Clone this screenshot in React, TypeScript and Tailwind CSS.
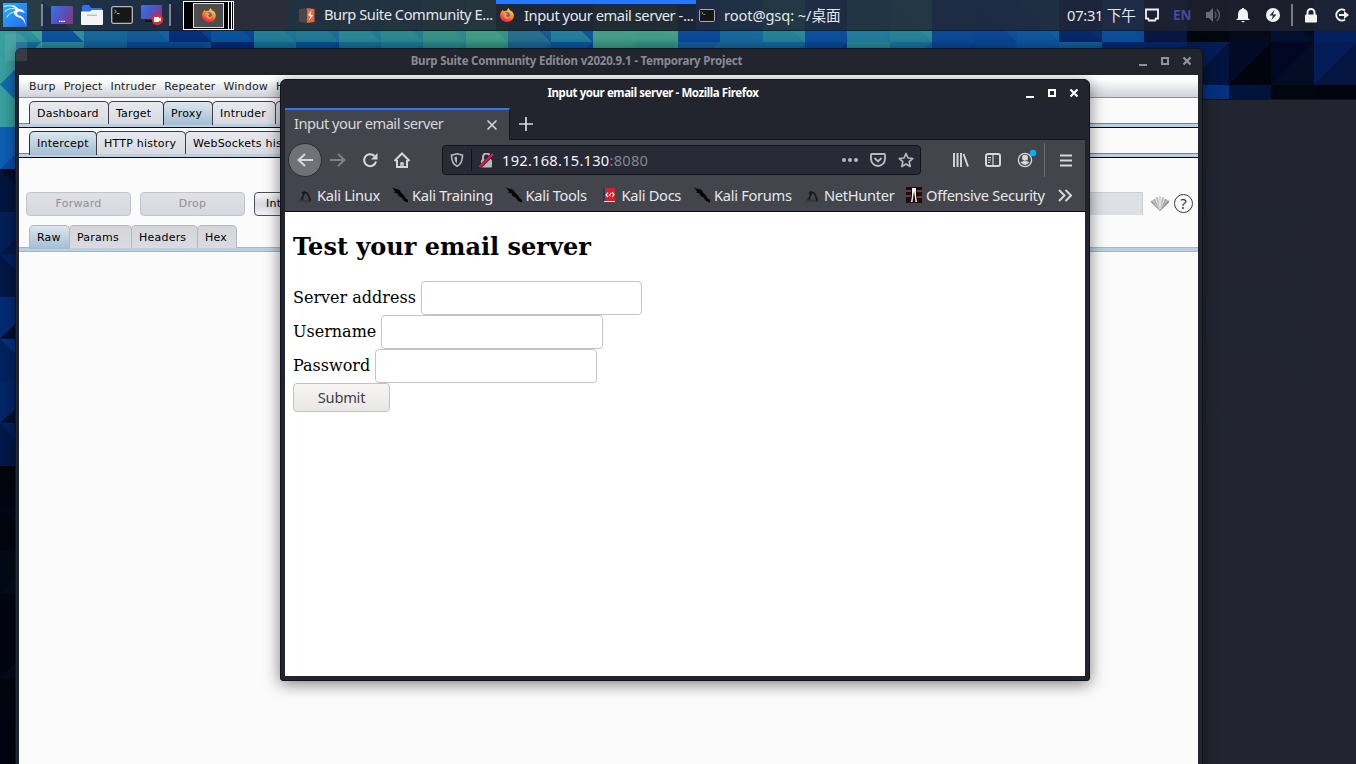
import React from 'react';

const TOP = [
  ['#3fa39c', '#2b929f'], ['#318f9f', '#0d54a0'], ['#14669f', '#17689c'], ['#1263a1', '#145b99'], ['#073f92', '#052f7c'],
  ['#0a4796', '#0b53a0'], ['#17789b', '#247e99'], ['#1c6f9c', '#227b98'], ['#207d99', '#298998'], ['#237f95', '#2c8b92'],
  ['#2e8b92', '#369488'], ['#389489', '#409f88'], ['#155c98', '#277090'], ['#0f56a0', '#237f9f'], ['#42a08c', '#449f8a'],
  ['#44a087', '#409f88'], ['#0b4b9c', '#0b4c9c'], ['#176aa2', '#176aa0'], ['#298b9a', '#25839a'], ['#0b4e9e', '#0b52a0'],
  ['#207b9d', '#227e9f'], ['#2b8b9c', '#26859a'], ['#0b4998', '#0b4b9a'], ['#0c519b', '#0b4698'], ['#10609e', '#0f57a0'],
  ['#07306e', '#06296c'], ['#0b4c9a', '#0b4f9c'], ['#061845', '#081842'], ['#010510', '#02060f'], ['#050818', '#070a1a'],
  ['#02091c', '#021030'], ['#032059', '#03205f'],
];
const MID = [
  ['#3da49d', '#1874a6'], ['#2f8da0', '#2b8da0'], ['#17639f', '#17659f'], ['#0b4a9a', '#0b4a98'], ['#0b5ba0', '#0b4f98'],
  ['#062a78', '#062c7c'], ['#17709a', '#17729c'], ['#094b98', '#0a5299'], ['#166d97', '#1b7498'], ['#1b7896', '#207c95'],
  ['#298694', '#2e8b90'], ['#359488', '#3a9888'], ['#176296', '#1b6a99'], ['#0b499b', '#0f56a0'], ['#3b9a8a', '#3f9f8a'],
  ['#3b9a8a', '#379588'], ['#1a6da0', '#155fa0'], ['#176ba0', '#1868a0'], ['#1666a0', '#156aa0'], ['#073e90', '#0a4a98'],
  ['#298b9a', '#2a8b9a'], ['#16669e', '#1b74a0'], ['#094490', '#0a4a98'], ['#0c509a', '#0b4c99'], ['#0f569e', '#0f58a0'],
  ['#105699', '#13609e'], ['#072b70', '#052a73'], ['#06225e', '#05286c'], ['#02143d', '#031d55'], ['#01040d', '#020a25'],
  ['#020c22', '#020822'], ['#031540', '#041d58'],
];
const LOW = ['#3aa09f', '#083d8a', '#05307f', '#02143a', '#01060f', '#010510'];
const EDGE = [
  ['#0d5fb4', '#0a4aa8'], ['#02153f', '#010c2a'], ['#032058', '#031848'], ['#021744', '#022062'], ['#032b74', '#010f30'],
  ['#02225e', '#033080'], ['#032668', '#01102e'], ['#021848', '#032060'], ['#01060f', '#020518'], ['#01060f', '#010818'],
  ['#010a16', '#020d20'], ['#010512', '#010714'], ['#010512', '#020d1c'], ['#010610', '#02060e'], ['#010410', '#01050f'],
];

function lowColor(i: number) {
  if (i === 0) return LOW[0];
  return i < 28 ? LOW[1] : LOW[i - 26];
}

function Wallpaper() {
  const p = 42.4;
  return (
    <svg className="absolute inset-0" width="1356" height="764" shapeRendering="crispEdges">
      <rect width="1356" height="764" fill="#010611" />
      {TOP.map(([a, b], i) => (
        <g key={i} transform={`translate(${i * p - 0.6} 0)`}>
          <rect width="43" height="43" fill={a} />
          <path d="M0 0V42.4H42.4z" fill={b} />
          <rect y="42" width="43" height="43" fill={MID[i][0]} />
          <path d={i > 26 ? 'M0 84.7V42H0L42.4 42z' : 'M0 42H42.4L36 48V84L0 84z'} fill={MID[i][1]} />
          <rect y="84.6" width="43" height="43" fill={lowColor(i)} />
        </g>
      ))}
      {EDGE.map(([a, b], i) => (
        <g key={i} transform={`translate(0 ${127 + i * p})`}>
          <rect width="16" height="43" fill={a} />
          <path d={i % 2 ? 'M0 0H16V16z' : 'M16 27V42H0z'} fill={b} />
        </g>
      ))}
      <rect y="31" width="16" height="96" fill="#38a09e" />
      <path d="M0 85L16 68V101z" fill="#1469ac" />
    </svg>
  );
}

function Terminal({ className = '' }: { className?: string }) {
  return (
    <svg className={className} viewBox="0 0 22 18">
      <rect x=".7" y=".7" width="20.6" height="16.6" rx="1.5" fill="#171717" stroke="#b8b8b8" strokeWidth="1.3" />
      <path d="M3.5 4l1.8 1.6L3.5 7M6 7.5h2.5" stroke="#ccc" fill="none" strokeWidth=".9" />
    </svg>
  );
}

function Firefox({ className = '' }: { className?: string }) {
  return (
    <svg className={className} viewBox="0 0 16 16">
      <defs>
        <linearGradient id="ff" x1=".8" y1="0" x2=".3" y2="1">
          <stop offset="0" stopColor="#ffe14a" /><stop offset=".45" stopColor="#ff9422" /><stop offset=".8" stopColor="#ff3b45" /><stop offset="1" stopColor="#e5205f" />
        </linearGradient>
      </defs>
      <path d="M2 3.5L2.6 2l1.7 1.8C6 3 7 3 8 3c.2-1.2.8-2 1.8-3 .4 1.8 2 2.4 3 4l.4-1C15 5 16 7 15.8 9c-.4 4-3.8 7-7.8 7S0 12.8 0 8.5C0 6.500 1 5 2 3.500z" fill="url(#ff)" />
      <circle cx="7.8" cy="8.4" r="3.5" fill="#5750d8" />
      <path d="M3.500 5.500c1.500-1 3-.5 4 .4 1 .8 2 .3 2 .8 0 .8-1.700 1-2.200 1.700-.5.8.5 2 1.900 1.800 1.200-.2 1.800-1 2.200-2-.1 3-1.500 4-3.500 4-3 0-5-3-4.400-6.700z" fill="#ff9a24" />
    </svg>
  );
}

function Kali() {
  return (
    <svg className="h-6 w-6 shrink-0" viewBox="0 0 24 24">
      <defs><linearGradient id="k" x2="1" y2="1"><stop stopColor="#26b5f5" /><stop offset="1" stopColor="#2666f4" /></linearGradient></defs>
      <rect width="24" height="24" fill="url(#k)" />
      <path d="M1 3.500c4-1.500 8-1 12 1.500M2 8.500c3-3 7-3.500 11-2.500M4 14c1.500-3 4-4.500 7-5" fill="none" stroke="#fff" strokeWidth=".9" strokeLinecap="round" />
      <path d="M8 2c3 .2 5.500 1.500 7 3.500l4.500 1.300L22 10l-5-1.500c-3-.3-4 2.500-1.500 3.700 4.500 1 7 4 7.200 10.300-1.300-4.800-3.500-7.200-7.200-8.200-4.500-1.200-6-5.300-2.500-8.300C11.800 4.300 10 2.800 8 2z" fill="#fff" />
    </svg>
  );
}

function PanelLaunchers() {
  return (
    <>
      <svg className="ml-2 h-[18px] w-[22px] shrink-0" viewBox="0 0 22 18">
        <defs><linearGradient id="m" x2="1" y2=".5"><stop stopColor="#3478ec" /><stop offset=".5" stopColor="#4f56c8" /><stop offset="1" stopColor="#7b3d88" /></linearGradient></defs>
        <rect width="22" height="18" rx="1" fill="url(#m)" /><path d="M8 15.300h6" stroke="#fff" strokeWidth="1.300" strokeDasharray="1.500 .7" />
      </svg>
      <svg className="ml-2 h-5 w-[22px] shrink-0" viewBox="0 0 22 20">
        <path d="M1 8V2q0-2 2-2h5l2 3h10q1 0 1 1v4z" fill="#2f73e8" /><path d="M0 6.500h9l2-1.500h11v14q0 1-1 1H1q-1 0-1-1z" fill="#f4f4f4" /><path d="M6.500 10.300h9" stroke="#c4bfbb" strokeWidth="1.600" strokeLinecap="round" />
      </svg>
      <Terminal className="ml-2 h-[18px] w-[22px] shrink-0" />
      <svg className="ml-[7px] h-[22px] w-[24px] shrink-0" viewBox="0 0 24 22">
        <rect x="1" y="1" width="21" height="14" rx="1" fill="url(#m)" /><path d="M5 17h13" stroke="#111" strokeWidth="2" />
        <circle cx="17.500" cy="15.500" r="5.800" fill="#e5252f" /><path d="M14 13h5v1.500l2-1v4l-2-1V18h-5z" fill="#fff" />
      </svg>
    </>
  );
}

function Panel() {
  return (
    <div className="absolute top-0 left-0 flex h-[31px] w-[1356px] items-center border-b border-[#1c1e26] bg-[#21242fce] pl-[3px] font-['Noto_Sans','Noto_Sans_CJK_SC',sans-serif] text-[14.67px] text-[#e6e7ea]">
      <Kali />
      <div className="ml-[14px] h-[22px] w-[2px] bg-[#7f8794]" />
      <PanelLaunchers />
      <div className="ml-[5px] h-[22px] w-[2px] bg-[#7f8794]" />
      <div className="ml-3 flex h-[29px] w-[51px] shrink-0 border border-white bg-black">
        <div className="h-full w-[10px] shrink-0" />
        <div className="-ml-px my-px flex w-[31px] shrink-0 items-center justify-center border border-[#ddd] bg-[#4d4d4d]"><Firefox className="h-[14px] w-[14px]" /></div>
        <div className="ml-1 w-[4px] shrink-0 border-x border-white" />
      </div>
      <div className="h-[30px] w-[54px] shrink-0 bg-[#2b2d39]" />
      <div className="flex h-[30px] w-[208px] shrink-0 items-center bg-[#242f3b66] pl-[11px]">
        <svg className="h-[15px] w-4 shrink-0" viewBox="0 0 16 15"><path d="M0 1l8-1v15l-8-1z" fill="#4b4746" /><path d="M8 0l7.500 1v13L8 15z" fill="#ee6238" /><path d="M12.500 2L9 7l2.500 1-2 5L14 7.500 11.500 6.500z" fill="#fff" /></svg>
        <span className="ml-[9px] pb-[2px] tracking-[-.44px] whitespace-nowrap">Burp Suite Community E...</span>
      </div>
      <div className="flex h-[30px] w-[200px] shrink-0 items-center border-t-4 border-[#2777ff] bg-[#1d222b99] pb-[5px] pl-1">
        <Firefox className="h-[14px] w-[14px] shrink-0" />
        <span className="ml-[10px] tracking-[-.43px] whitespace-nowrap">Input your email server -...</span>
      </div>
      <div className="flex h-[30px] w-[364px] shrink-0 items-center pl-[3px]">
        <Terminal className="h-[13px] w-4 shrink-0" />
        <span className="ml-[9px] tracking-[-.1px] whitespace-nowrap">root@gsq: ~/桌面</span>
      </div>
      <span className="ml-[7px] tracking-[-.25px] whitespace-nowrap">07:31 下午</span>
      <div className="ml-auto flex items-center pr-[7px]">
        <svg width="14" height="14" viewBox="0 0 14 14"><path d="M1 1.500h12v9h-2l-1 2H4l-1-2H1z" fill="none" stroke="#f3f3f3" strokeWidth="1.800" /></svg>
        <span className="ml-[14px] w-[18px] text-center text-[13.5px] font-bold text-[#424c9c]">EN</span>
        <svg className="ml-[14px]" width="16" height="16" viewBox="0 0 16 16"><path d="M1 5h3l4-4v14l-4-4H1z" fill="#6a6c75" /><path d="M10 5q2 3 0 6M12 2q5 6 0 12" stroke="#5c5e68" strokeWidth="1.400" fill="none" /></svg>
        <svg className="ml-[15px]" width="14" height="16" viewBox="0 0 14 16"><path d="M6 1h2v1q4 .5 4 6v3l2 2H0l2-2V8q0-5.500 4-6zM5 14h4l-2 1.500z" fill="#f3f3f3" /></svg>
        <svg className="ml-4" width="14" height="14" viewBox="0 0 14 14"><circle cx="7" cy="7" r="7" fill="#f3f3f3" /><path d="M8.500 2L3.500 7.500H7L5.500 12l5-5.500H7z" fill="#22252f" /></svg>
        <div className="ml-[11px] h-[22px] w-[2px] bg-[#777a84]" />
        <svg className="ml-[11px]" width="14" height="15" viewBox="0 0 14 15"><path d="M3.500 7V4.500a3.500 3.500 0 017 0V7" fill="none" stroke="#f3f3f3" strokeWidth="2" /><rect x="1" y="6.500" width="12" height="8" rx="1" fill="#f3f3f3" /></svg>
        <svg className="ml-4" width="15" height="14" viewBox="0 0 15 14"><path d="M11 2.500A5.500 5.500 0 1011 11.500" fill="none" stroke="#f3f3f3" strokeWidth="2" /><path d="M5 6h5V3l5 4-5 4V8H5z" fill="#f3f3f3" /></svg>
      </div>
    </div>
  );
}

function Controls({ color }: { color: string }) {
  return (
    <svg width="56" height="12" viewBox="0 0 56 12" stroke={color} strokeWidth="2" fill="none">
      <path d="M2 10h8" /><rect x="25" y="3" width="6" height="6" /><path d="M46.500 2.500l7 7m0-7l-7 7" strokeWidth="2.200" />
    </svg>
  );
}

function BurpTab({ w, label, active = false, soft = false }: { w: string; label?: string; active?: boolean; soft?: boolean }) {
  const border = soft ? 'border-[#b4b6bd]' : active ? 'border-[#22303e]' : 'border-[#3c4049]';
  const fill = active ? 'from-[#dbe7ee] to-[#a3bdd2]' : soft ? 'from-[#d5d6da] to-[#dadbe2]' : 'from-[#e8e9ed] to-[#d8dae1]';
  return (
    <div className={`-mr-px flex shrink-0 items-center rounded-t-[5px] border border-b-0 bg-linear-to-b pl-[7px] whitespace-nowrap ${w} ${border} ${fill} ${active ? 'h-[24px] pt-[2px]' : 'h-[23px] pt-[3px]'}`}>{label}</div>
  );
}

function TabRow({ children, soft = false }: { children: React.ReactNode; soft?: boolean }) {
  return (
    <div className="h-[30px]">
      <div className="relative z-10 flex h-[23px] items-start pl-[10px]">{children}</div>
      <div className={`-mt-px h-[5px] border-y bg-[#bad0e4] ${soft ? 'border-[#a9b5c2]' : 'border-t-[#76818d] border-b-[#04060e]'}`} />
    </div>
  );
}

function Burp() {
  return (
    <div className="absolute top-[48px] left-[15px] isolate flex h-[730px] w-[1188px] flex-col rounded-t-[6px] border border-[#11141b] bg-[#22252e] pr-1 pl-[3px] shadow-[0_0_14px_rgba(0,0,0,.45)]">
      <div className="relative flex h-[26px] items-center justify-center font-['Noto_Sans',sans-serif] text-[11.5px] font-bold text-[#898b91]">
        <span className="relative -left-8 pb-[2px] tracking-[-.2px] whitespace-nowrap">Burp Suite Community Edition v2020.9.1 - Temporary Project</span>
        <div className="absolute top-[6px] right-[5px]"><Controls color="#939499" /></div>
      </div>
      <div className="flex-1 bg-[#fbfbfb] font-['DejaVu_Sans',sans-serif] text-[11px] tracking-[.22px] text-black">
        <div className="flex h-[23px] items-center gap-[8px] border-b border-[#8b8f9b] bg-linear-to-b from-white from-20% to-[#cfd2d9] pt-[2px] pl-[10px] tracking-[.17px] text-[#222]">
          <span>Burp</span><span>Project</span><span>Intruder</span><span>Repeater</span><span>Window</span><span>Help</span>
        </div>
        <div className="h-[3px]" />
        <TabRow>
          <BurpTab w="w-[80px]" label="Dashboard" /><BurpTab w="w-[56px]" label="Target" /><BurpTab w="w-[50px]" label="Proxy" active /><BurpTab w="w-[64px]" label="Intruder" /><BurpTab w="w-[70px]" />
        </TabRow>
        <TabRow>
          <BurpTab w="w-[68px]" label="Intercept" active /><BurpTab w="w-[90px]" label="HTTP history" /><BurpTab w="w-[130px]" label="WebSockets history" />
        </TabRow>
        <div className="flex h-[64px] items-start pt-[31px] pl-[7px]">
          <div className="flex h-[24px] w-[105px] items-center justify-center rounded-[4px] border border-[#c0c4cc] bg-linear-to-b from-[#dfe1e5] to-[#d6d8df] pt-px text-[#919194]">Forward</div>
          <div className="ml-[9px] flex h-[24px] w-[105px] items-center justify-center rounded-[4px] border border-[#c0c4cc] bg-linear-to-b from-[#dfe1e5] to-[#d6d8df] pt-px text-[#919194]">Drop</div>
          <div className="ml-[9px] flex h-[24px] w-[105px] items-center rounded-[4px] border border-[#4b4f5a] bg-linear-to-b from-[#fafafa] via-[#d7d9e0] to-[#f4f4f8] pt-px pl-[11px]">Intercept is on</div>
          <div className="ml-auto h-[23px] w-[200px] border-t border-r border-[#cbcfd5] bg-[#dde0e5]" />
          <svg className="mt-[4px] ml-[7px]" width="20" height="16" viewBox="0 0 20 16"><path d="M10 14.500L.8 6 2 4.500z" fill="#96989a" stroke="#a4a6a8" strokeWidth=".7" /><path d="M10 14.500L2.500 4 5 2.500z" fill="#b0b2b4" /><path d="M10 14.500L5.500 1.500 8 1z" fill="#bcbec0" /><path d="M10 14.500L9 .5h2z" fill="#c8cacc" /><path d="M10 14.500L12 1l2.500.5z" fill="#bcbec0" /><path d="M10 14.500L15 2.500 17.500 4z" fill="#a9abad" /><path d="M10 14.500L18 4.500 19.200 6z" fill="#868890" stroke="#96989a" strokeWidth=".7" /></svg>
          <div className="mt-[2px] mr-[5px] ml-1 flex h-[19px] w-[19px] items-center justify-center rounded-full border-[1.5px] border-[#393939] font-['Noto_Sans'] text-[15px] tracking-normal text-[#333]">?</div>
        </div>
        <TabRow soft>
          <BurpTab w="w-[41px]" label="Raw" active soft /><BurpTab w="w-[63px]" label="Params" soft /><BurpTab w="w-[67px]" label="Headers" soft /><BurpTab w="w-[40px]" label="Hex" soft />
        </TabRow>
      </div>
    </div>
  );
}

function Dragon() {
  return <svg className="h-4 w-4 shrink-0" viewBox="0 0 16 16"><path d="M4 12c3-1 1.500-5.500 4.500-6.500 3 0 3.500 5.500 5 8.500M8 4.500l-3 2" fill="none" stroke="#17191d" strokeWidth="1.700" /><path d="M2 14h12M3 12.500h4" stroke="#292c32" strokeWidth="1.200" /></svg>;
}
function Knife() {
  return <svg className="h-4 w-4 shrink-0" viewBox="0 0 16 16"><path d="M0 0l2 1.500L5 2l2.500 1L9 5.500l3 3 1.500 2.500 2.500 2v2.500L12 14l-2.500-3.500L6.500 9 5.500 6.500 2 5.500 3 4.500z" fill="#050607" /></svg>;
}
function Bookmark({ icon, label, w }: { icon: React.ReactNode; label: string; w: string }) {
  return <div className={`flex shrink-0 items-center gap-[4px] whitespace-nowrap ${w}`}>{icon}<span>{label}</span></div>;
}

function FirefoxWindow() {
  const stroke = { fill: 'none', stroke: '#d7d7da', strokeWidth: 2 };
  return (
    <div className="absolute top-[79px] left-[280px] flex h-[602px] w-[810px] flex-col rounded-t-[6px] rounded-b-[3px] border border-[#10131a] bg-[#22252e] px-1 font-['Noto_Sans',sans-serif] shadow-[0_3px_16px_rgba(0,0,0,.5)]">
      <div className="relative flex h-[28px] items-center justify-center text-[11.5px] font-bold text-white">
        <span className="relative -left-8 pb-[2px] tracking-[-.42px] whitespace-nowrap">Input your email server - Mozilla Firefox</span>
        <div className="absolute top-[7px] right-[5px]"><Controls color="#ffffff" /></div>
      </div>
      <div className="flex h-[32px] items-stretch text-[14.67px] text-[#d8d8da]">
        <div className="flex w-[225px] items-center justify-between border-t-2 border-r border-[#2777ff] border-r-[#15171d] bg-[#43454c] pr-3 pl-[9px]">
          <span className="pb-[4px] tracking-[-.52px]">Input your email server</span>
          <svg width="10" height="10" viewBox="0 0 10 10"><path d="M.5.5l9 9m0-9l-9 9" stroke="#dcdcdf" strokeWidth="1.500" /></svg>
        </div>
        <div className="flex flex-1 items-center border-b border-[#15171d] pl-[9px]"><svg width="14" height="14" viewBox="0 0 14 14"><path d="M7 0v14M0 7h14" stroke="#dcdcdf" strokeWidth="1.700" /></svg></div>
      </div>
      <div className="flex h-[40px] items-center bg-[#43454c] pl-[3px]">
        <div className="flex h-[34px] w-[34px] items-center justify-center rounded-full border border-[#2b2d33] bg-[#717277]"><svg width="16" height="14" viewBox="0 0 16 14"><path d="M16 7H1.500M8 1L1.500 7 8 13" {...stroke} /></svg></div>
        <svg className="ml-2" width="16" height="14" viewBox="0 0 16 14"><path d="M0 7h14.500M8 1l6.500 6L8 13" fill="none" stroke="#7f8086" strokeWidth="2" /></svg>
        <svg className="ml-4" width="16" height="16" viewBox="0 0 16 16"><path d="M12.500 4A6 6 0 1014 9.500" {...stroke} /><path d="M15.500 1v6.500H9z" fill="#d7d7da" /></svg>
        <svg className="ml-4" width="16" height="16" viewBox="0 0 16 16"><path d="M.5 9L8 1.500 15.500 9M3 8v7h10V8" {...stroke} /><path d="M7 15v-4h2v4" fill="none" stroke="#d7d7da" strokeWidth="1.500" /></svg>
        <div className="ml-8 flex h-[30px] w-[479px] items-center rounded-[4px] border border-[#121419] bg-[#282a35] text-[14.67px] text-[#f5f5f7]">
          <svg className="ml-[7px]" width="14" height="14" viewBox="0 0 14 14"><path d="M7 .8l5.500 1.400c0 5-1 8.800-5.500 11C2.500 11 1.500 7.200 1.500 2.200z" fill="none" stroke="#b7b8bd" strokeWidth="1.600" /><path d="M7 3.500v7C5 9 4.500 7 4.500 4z" fill="#b7b8bd" /></svg>
          <div className="ml-[7px] h-[22px] w-px bg-[#101218]" />
          <svg className="ml-[7px]" width="15" height="15" viewBox="0 0 15 15"><path d="M4 7V4a3.500 3.500 0 017 0v3" fill="none" stroke="#b7b8bd" strokeWidth="2" /><rect x="2" y="6.500" width="11" height="8" rx="1" fill="#b7b8bd" /><path d="M1 14L14 1" stroke="#282a35" strokeWidth="3.500" /><path d="M.5 14L14 1" stroke="#f01548" strokeWidth="2" /></svg>
          <span className="ml-[8px] tracking-[.25px]">192.168.15.130<span className="text-[#85878e]">:8080</span></span>
          <svg className="ml-auto" width="16" height="4" viewBox="0 0 16 4" fill="#b7b8bd"><circle cx="2" cy="2" r="2" /><circle cx="8" cy="2" r="2" /><circle cx="14" cy="2" r="2" /></svg>
          <svg className="ml-3" width="16" height="14" viewBox="0 0 16 14"><path d="M2 1h12q1 0 1 1v4a7 7 0 01-14 0V2q0-1 1-1zM4.500 5L8 8.500 11.500 5" fill="none" stroke="#b7b8bd" strokeWidth="1.900" /></svg>
          <svg className="mr-[6px] ml-3" width="16" height="16" viewBox="0 0 16 16"><path d="M8 1.500l2 4.500 4.700.5L11.200 9.700l1 4.800L8 12l-4.200 2.500 1-4.800L1.300 6.500 6 6z" fill="none" stroke="#b7b8bd" strokeWidth="1.700" strokeLinejoin="round" /></svg>
        </div>
        <svg className="ml-8" width="16" height="14" viewBox="0 0 16 14"><path d="M1 0v14M4.500 0v14M8 0v14M10.500 1L15 13.500" {...stroke} strokeWidth="1.900" /></svg>
        <svg className="ml-4" width="16" height="14" viewBox="0 0 16 14"><rect x="1" y="1" width="14" height="12" rx="2" {...stroke} /><path d="M8 1v12M3 4.500h3M3 7h3M3 9.500h2" stroke="#d7d7da" strokeWidth="1.200" /></svg>
        <svg className="mb-[2px] ml-4" width="20" height="20" viewBox="0 0 20 20"><circle cx="8" cy="11" r="6.600" fill="none" stroke="#d7d7da" strokeWidth="1.300" /><circle cx="8" cy="8.800" r="3" fill="#d7d7da" /><path d="M3.500 13q4.500-2 9 0-4.500 6-9 0" fill="#d7d7da" /><circle cx="16" cy="4" r="3.200" fill="#00b3f4" /></svg>
        <div className="ml-[7px] h-[34px] w-px bg-[#686a70]" />
        <svg className="ml-[15px]" width="12" height="13" viewBox="0 0 12 13"><path d="M0 1.500h12M0 6.500h12M0 11.500h12" {...stroke} /></svg>
      </div>
      <div className="flex h-[32px] items-center border-b border-[#0b0c11] bg-[#43454c] pb-px pl-[12px] text-[14.67px] tracking-[-.3px] text-[#e7e7e9]">
        <Bookmark w="w-[95px]" icon={<Dragon />} label="Kali Linux" />
        <Bookmark w="w-[113.5px]" icon={<Knife />} label="Kali Training" />
        <Bookmark w="w-[96px]" icon={<Knife />} label="Kali Tools" />
        <Bookmark w="w-[92.500px]" icon={<svg className="h-4 w-4" viewBox="0 0 16 16"><path d="M1 1h2v13H1z" fill="#20386a" /><path d="M3 1h10v13H3z" fill="#de1c24" /><path d="M2 14h11v1H2z" fill="#ddd" /><path d="M6 5.500L4 8l2 2M10 5l2 2.500L10 10M9 6L7 9" stroke="#fff" strokeWidth="1.200" fill="none" /></svg>} label="Kali Docs" />
        <Bookmark w="w-[110px]" icon={<Knife />} label="Kali Forums" />
        <Bookmark w="w-[102px]" icon={<Dragon />} label="NetHunter" />
        <Bookmark w="w-[152px]" icon={<svg className="h-4 w-4" viewBox="0 0 16 16"><rect width="16" height="16" fill="#250a0b" /><path d="M0 4h5M0 9h5M11 4h5M11 10h5" stroke="#655556" strokeWidth="1.500" /><path d="M6 1h4v8l1 6H9.500L8 4 6.500 15H5l1-6z" fill="#f2f2f2" /></svg>} label="Offensive Security" />
        <svg width="14" height="13" viewBox="0 0 14 13"><path d="M1 1l5.500 5.500L1 12M7.500 1L13 6.500 7.500 12" {...stroke} /></svg>
      </div>
      <div className="flex h-[464px] flex-col items-start bg-white pl-2 font-['DejaVu_Serif',serif] text-[16px] leading-[19px] text-black">
        <h1 className="mt-5 mb-[20px] text-[24px] leading-[29px] font-bold">Test your email server</h1>
        <label className="flex h-[34px] items-center gap-[5px]"><span className="pb-[2px]">Server address</span><input className="h-[34px] w-[221px] rounded-[4px] border border-[#c8c3be] bg-white" /></label>
        <label className="flex h-[34px] items-center gap-[5px]"><span className="pb-[2px]">Username</span><input className="h-[34px] w-[222px] rounded-[4px] border border-[#c8c3be] bg-white" /></label>
        <label className="flex h-[34px] items-center gap-[5px]"><span className="pb-[2px]">Password</span><input type="password" className="h-[34px] w-[222px] rounded-[4px] border border-[#c8c3be] bg-white" /></label>
        <button className="h-[29px] w-[97px] rounded-[4px] border border-[#c5c0bb] bg-linear-to-b from-[#f6f5f4] to-[#e9e7e5] font-['Noto_Sans',sans-serif] text-[14.67px] tracking-[-.25px] text-[#3c4144]">Submit</button>
      </div>
    </div>
  );
}

export default function App() {
  return (
    <div className="relative h-[764px] w-[1356px] overflow-hidden">
      <Wallpaper />
      <Panel />
      <div className="absolute top-[99px] left-[1190px] h-[680px] w-[190px] overflow-hidden border-t border-[#12151c] bg-[#22252f]">
        <svg width="166" height="665" fill="#202733"><path d="M0 70h40v42H0zM40 112h85l-43 43H40zM0 197h125l-42 43H0zM82 155l42 42v-42zM82 240h42v42zM0 282l42 43H0z" opacity=".65" /></svg>
      </div>
      <Burp />
      <svg className="absolute top-[34px] left-[5px]" width="22" height="27"><path d="M0 0h15l7 7v20H0z" fill="#b9c7dc" opacity=".14" /></svg>
      <FirefoxWindow />
    </div>
  );
}
